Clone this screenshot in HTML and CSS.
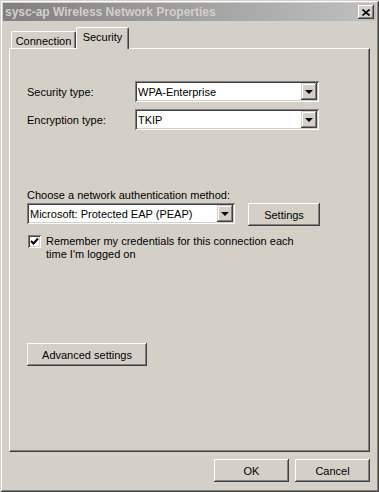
FILE: index.html
```html
<!DOCTYPE html>
<html lang="en">
  <head>
    <meta charset="UTF-8" />
    <meta name="viewport" content="width=device-width, initial-scale=1.0" />
    <title>sysc-ap Wireless Network Properties</title>
    <link rel="stylesheet" href="styles.css">
  </head>
  <body>
    <div class="window">
      <div class="titlebar">
        <span class="title">sysc-ap Wireless Network Properties</span>
        <button class="close-btn" title="Close">
          <svg width="8" height="7" viewBox="0 0 8 7">
            <path d="M0.5 0.5 L7.5 6.5 M7.5 0.5 L0.5 6.5" stroke="#000" stroke-width="1.6" fill="none" />
          </svg>
        </button>
      </div>

      <div class="content">
        <div class="tabs">
          <div class="tab">Connection</div>
          <div class="tab active">Security</div>
        </div>

        <div class="panel">
          <div class="field-row">
            <label class="field-label">Security type:</label>
            <div class="combo type-combo">
              <span class="combo-value">WPA-Enterprise</span>
              <span class="combo-arrow"></span>
            </div>
          </div>
          <div class="field-row second">
            <label class="field-label">Encryption type:</label>
            <div class="combo type-combo">
              <span class="combo-value">TKIP</span>
              <span class="combo-arrow"></span>
            </div>
          </div>

          <p class="section-label">Choose a network authentication method:</p>
          <div class="method-row">
            <div class="combo method-combo">
              <span class="combo-value">Microsoft: Protected EAP (PEAP)</span>
              <span class="combo-arrow"></span>
            </div>
            <button class="btn settings-btn">Settings</button>
          </div>

          <div class="check-row">
            <span class="checkbox">
              <svg width="9" height="9" viewBox="0 0 9 9">
                <path d="M1 4 L3.5 6.5 L8 1.5" stroke="#000" stroke-width="2" fill="none" />
              </svg>
            </span>
            <span class="check-text">Remember my credentials for this connection each<br />time I'm logged on</span>
          </div>

          <button class="btn advanced-btn">Advanced settings</button>
        </div>

        <div class="footer">
          <button class="btn footer-btn">OK</button>
          <button class="btn footer-btn">Cancel</button>
        </div>
      </div>
    </div>
  </body>
</html>
```

FILE: styles.css
```css
* {
  padding: 0;
  margin: 0;
  box-sizing: border-box;
}
html,
body {
  font-size: 11px;
  font-family: "Liberation Sans", Arial, sans-serif;
  color: #000;
  background: #d4d0c8;
}

.window {
  width: 379px;
  height: 492px;
  padding: 3px;
  display: flex;
  flex-direction: column;
  background: #d4d0c8;
  box-shadow: inset 1px 1px #d4d0c8, inset -1px -1px #404040,
    inset 2px 2px #fff, inset -2px -2px #808080;
}

/* title bar */
.titlebar {
  height: 18px;
  display: flex;
  align-items: center;
  justify-content: space-between;
  padding: 0 2px 0 2px;
  background: linear-gradient(to right, #808080, #c0c0c0);
}
.title {
  font-weight: bold;
  font-size: 12px;
  color: #d4d0c8;
  white-space: nowrap;
}
.close-btn {
  width: 16px;
  height: 14px;
  border: none;
  background: #d4d0c8;
  display: flex;
  align-items: center;
  justify-content: center;
  box-shadow: inset -1px -1px #404040, inset 1px 1px #fff,
    inset -2px -2px #808080;
}

.content {
  flex: 1;
  display: flex;
  flex-direction: column;
  padding: 0 6px;
}

/* tabs */
.tabs {
  display: flex;
  align-items: flex-end;
  height: 21px;
  margin-top: 7px;
  margin-bottom: -1px;
  padding-left: 2px;
}
.tab {
  height: 18px;
  padding: 0 6px;
  display: flex;
  align-items: center;
  justify-content: center;
  border-top: 1px solid #fff;
  border-left: 1px solid #fff;
  border-right: 1px solid #404040;
  border-top-left-radius: 2px;
  border-top-right-radius: 2px;
  box-shadow: inset -1px 0 #808080;
  background: #d4d0c8;
}
.tab:first-child {
  width: 65px;
  padding-top: 1px;
}
.tab.active {
  position: relative;
  z-index: 1;
  width: 53px;
  height: 22px;
  padding-bottom: 3px;
}

/* panel */
.panel {
  flex: 1;
  display: flex;
  flex-direction: column;
  align-items: flex-start;
  padding: 32px 18px 0 17px;
  border: 1px solid;
  border-color: #fff #404040 #404040 #fff;
  box-shadow: inset -1px -1px #808080;
}

.field-row {
  display: flex;
  align-items: center;
  height: 21px;
}
.field-row.second {
  margin-top: 7px;
}
.field-label {
  width: 108px;
}

/* combo boxes */
.combo {
  height: 21px;
  display: flex;
  align-items: center;
  justify-content: space-between;
  padding: 2px;
  background: #fff;
  box-shadow: inset 1px 1px #808080, inset -1px -1px #fff,
    inset 2px 2px #404040, inset -2px -2px #d4d0c8;
}
.type-combo {
  width: 184px;
}
.method-combo {
  width: 208px;
}
.combo-value {
  padding-left: 1px;
  white-space: nowrap;
}
.combo-arrow {
  width: 16px;
  height: 17px;
  display: flex;
  align-items: center;
  justify-content: center;
  background: #d4d0c8;
  box-shadow: inset -1px -1px #404040, inset 1px 1px #d4d0c8,
    inset -2px -2px #808080, inset 2px 2px #fff;
}
.combo-arrow::after {
  content: "";
  width: 0;
  height: 0;
  margin-top: 1px;
  border-left: 4px solid transparent;
  border-right: 4px solid transparent;
  border-top: 4px solid #000;
}

.section-label {
  margin-top: 59px;
  line-height: 13px;
}

.method-row {
  display: flex;
  align-items: flex-start;
  margin-top: 1px;
}

/* buttons */
.btn {
  height: 23px;
  border: none;
  background: #d4d0c8;
  font-family: inherit;
  font-size: 11px;
  color: #000;
  box-shadow: inset -1px -1px #404040, inset 1px 1px #fff,
    inset -2px -2px #808080;
}
.settings-btn {
  width: 72px;
  margin-left: 13px;
}
.advanced-btn {
  width: 120px;
  margin-top: 82px;
}

/* checkbox */
.check-row {
  display: flex;
  align-items: flex-start;
  margin-top: 9px;
  margin-left: 1px;
}
.checkbox {
  width: 13px;
  height: 13px;
  display: flex;
  align-items: center;
  justify-content: center;
  background: #fff;
  box-shadow: inset 1px 1px #808080, inset -1px -1px #fff,
    inset 2px 2px #404040, inset -2px -2px #d4d0c8;
}
.check-text {
  margin-left: 5px;
  line-height: 13px;
}

.footer {
  display: flex;
  justify-content: flex-end;
  gap: 6px;
  padding: 7px 0;
}
.footer-btn {
  width: 75px;
}
```
